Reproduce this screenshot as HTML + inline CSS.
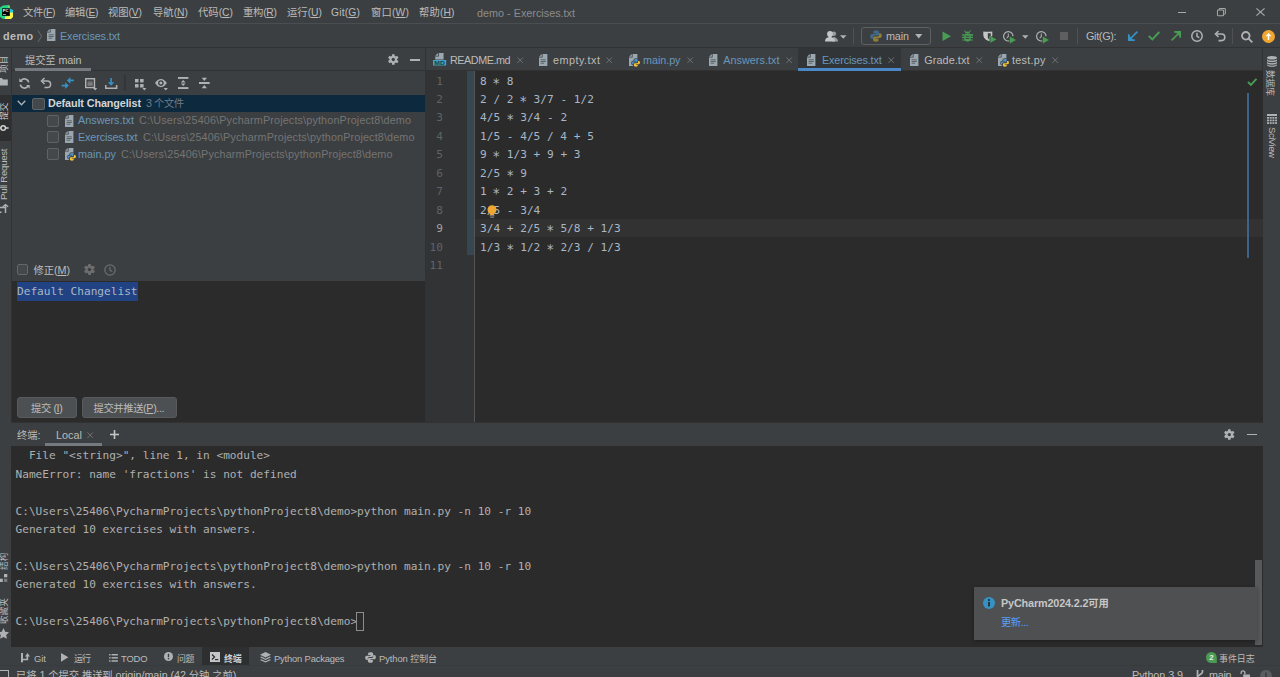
<!DOCTYPE html>
<html lang="zh">
<head>
<meta charset="utf-8">
<title>demo - Exercises.txt</title>
<style>
*{box-sizing:border-box;margin:0;padding:0}
html,body{width:1280px;height:677px;overflow:hidden;background:#3c3f41}
body{position:relative;font-family:"Liberation Sans","Noto Sans CJK SC",sans-serif;font-size:10.8px;color:#bbbbbb;line-height:14px}
.a{position:absolute}
.t{position:absolute;white-space:nowrap;height:14px;line-height:14px}
.m{position:absolute;white-space:pre;font-family:"DejaVu Sans Mono","Liberation Mono","Noto Sans CJK SC",monospace;font-size:11.13px;height:18px;line-height:18px;color:#a9b7c6}
.blue{color:#6897bb}
.grey{color:#747474}
.b{font-weight:bold}
.sm{font-size:9.400px}
.s{display:inline-block;transform:translateY(2px) scale(1.200)}
.c{font-size:.954em}
.mn{font-size:10.300px}
.mn .c{font-size:1em}
u{text-decoration:underline;text-underline-offset:1px}
svg{position:absolute;overflow:visible}
</style>
</head>
<body>
<!-- ===== backgrounds ===== -->
<div class="a" id="menubar" style="left:0;top:0;width:1280px;height:23px;background:#3c3f41"></div>
<div class="a" style="left:0;top:23px;width:1280px;height:1px;background:#4b4e50"></div>
<div class="a" id="navbar" style="left:0;top:24px;width:1280px;height:23px;background:#3c3f41"></div>
<div class="a" style="left:0;top:47px;width:1280px;height:1px;background:#323232"></div>
<!-- left strip -->
<div class="a" id="lstrip" style="left:0;top:48px;width:11px;height:599px;background:#3c3f41"></div>
<div class="a" style="left:11px;top:48px;width:1px;height:375px;background:#323232"></div>
<!-- right strip -->
<div class="a" id="rstrip" style="left:1263px;top:48px;width:17px;height:599px;background:#3c3f41"></div>
<div class="a" style="left:1262px;top:48px;width:1px;height:375px;background:#323232"></div>
<!-- commit panel -->
<div class="a" id="commit" style="left:12px;top:48px;width:414px;height:374px;background:#3c3f41"></div>
<div class="a" style="left:425px;top:48px;width:1px;height:374px;background:#323232"></div>
<!-- editor -->
<div class="a" id="tabs" style="left:426px;top:48px;width:836px;height:22px;background:#3c3f41"></div>
<div class="a" style="left:426px;top:70px;width:836px;height:1px;background:#323232"></div>
<div class="a" id="editor" style="left:426px;top:71px;width:837px;height:351px;background:#2b2b2b"></div>
<div class="a" id="gutter" style="left:426px;top:71px;width:48px;height:351px;background:#313335"></div>
<div class="a" style="left:474px;top:71px;width:1px;height:351px;background:#555555"></div>
<!-- terminal -->
<div class="a" style="left:12px;top:422px;width:1250px;height:1px;background:#323232"></div>
<div class="a" id="termhead" style="left:11px;top:423px;width:1252px;height:23px;background:#3c3f41"></div>
<div class="a" id="term" style="left:11px;top:446px;width:1252px;height:201px;background:#2b2b2b"></div>
<!-- bottom bars -->
<div class="a" id="bottombar" style="left:0;top:647px;width:1280px;height:20px;background:#3c3f41"></div>
<div class="a" style="left:0;top:665px;width:1280px;height:1px;background:#383b3d"></div>
<div class="a" id="status" style="left:0;top:668px;width:1280px;height:9px;background:#3c3f41"></div>

<!-- ===== MENU BAR ===== -->
<svg style="left:-1px;top:5px" width="15" height="14" viewBox="0 0 15 14">
  <polygon points="0,3 4,0.500 9.500,0 10.500,2.500 11,8 8,13.500 4,14 0,11" fill="#21d789"/>
  <polygon points="9,1 10.300,0.300 10.800,3.500 14.200,5 14,8 10.500,8" fill="#1fc4e6"/>
  <polygon points="9.300,0.300 10.400,0.200 10.700,3 9.300,3" fill="#9be33a"/>
  <polygon points="6,14 12,14 14,12 14,7.500 10.500,7.500 10.500,11 6,11.500" fill="#fcf84a"/>
  <rect x="3.100" y="3.300" width="7.600" height="7.500" fill="#000"/>
  <text x="3.700" y="7.300" font-family="Liberation Sans,sans-serif" font-size="4.200" font-weight="bold" fill="#fff">PC</text>
  <rect x="4" y="9" width="3" height="0.700" fill="#ddd"/>
</svg>
<div class="t mn" style="letter-spacing:-0.328px;left:23px;top:5.600px"><span class="c">文件</span>(<u>F</u>)</div>
<div class="t mn" style="letter-spacing:-0.223px;left:65px;top:5.600px"><span class="c">编辑</span>(<u>E</u>)</div>
<div class="t mn" style="letter-spacing:-0.098px;left:108px;top:5.600px"><span class="c">视图</span>(<u>V</u>)</div>
<div class="t mn" style="letter-spacing:0.012px;left:153px;top:5.600px"><span class="c">导航</span>(<u>N</u>)</div>
<div class="t mn" style="letter-spacing:0.012px;left:198px;top:5.600px"><span class="c">代码</span>(<u>C</u>)</div>
<div class="t mn" style="letter-spacing:-0.238px;left:243px;top:5.600px"><span class="c">重构</span>(<u>R</u>)</div>
<div class="t mn" style="letter-spacing:0.012px;left:287px;top:5.600px"><span class="c">运行</span>(<u>U</u>)</div>
<div class="t mn" style="letter-spacing:0.191px;left:331px;top:5.600px">Git(<u>G</u>)</div>
<div class="t mn" style="letter-spacing:0.191px;left:371px;top:5.600px"><span class="c">窗口</span>(<u>W</u>)</div>
<div class="t mn" style="letter-spacing:0.137px;left:419px;top:5.600px"><span class="c">帮助</span>(<u>H</u>)</div>
<div class="t" style="letter-spacing:0.010px;left:477px;top:5.600px;color:#8c8c8c">demo - Exercises.txt</div>
<!-- window controls -->
<div class="a" style="left:1177.800px;top:12px;width:8.600px;height:1px;background:#a8a8a8"></div>
<svg style="left:1217.200px;top:8px" width="8.800" height="8.200" viewBox="0 0 10 10" preserveAspectRatio="none" fill="none" stroke="#a8a8a8" stroke-width="1.150">
  <rect x="0.5" y="2.5" width="7" height="7" rx="1"/><path d="M2.5 2.5V1.5a1 1 0 0 1 1-1h5a1 1 0 0 1 1 1v5a1 1 0 0 1-1 1H7.5"/>
</svg>
<svg style="left:1256px;top:8px" width="9" height="8" viewBox="0 0 10 10" preserveAspectRatio="none" fill="none" stroke="#a8a8a8" stroke-width="1.250">
  <path d="M0.5 0.5L9.5 9.5M9.5 0.5L0.5 9.5"/>
</svg>

<!-- ===== NAV BAR ===== -->
<div class="t b" style="letter-spacing:0.401px;left:3px;top:29px">demo</div>
<svg style="left:36.600px;top:29.500px" width="5.500" height="12.500" viewBox="0 0 6 12" preserveAspectRatio="none" fill="none" stroke="#65686a" stroke-width="1"><path d="M1 0.5L5 6L1 11.5"/></svg>
<svg class="ftxt" style="left:47px;top:29.400px" width="8.400" height="12" viewBox="0 0 8.400 12"><path d="M3.600 0H8.400V12H0V3.600H3.600Z" fill="#9aa7b0"/><path d="M0 2.800L2.800 0V2.800Z" fill="#9aa7b0"/><rect x="1.600" y="5.300" width="5.200" height="1" fill="#3c3f41" opacity=".65"/><rect x="1.600" y="7" width="5.200" height="1" fill="#3c3f41" opacity=".65"/><rect x="1.600" y="8.700" width="3.600" height="1" fill="#3c3f41" opacity=".65"/></svg>
<div class="t blue" style="letter-spacing:-0.100px;left:60px;top:29px">Exercises.txt</div>
<!-- toolbar right -->
<svg style="left:824.500px;top:30.500px" width="13" height="11" viewBox="0 0 13 11" fill="#c3c5c7"><circle cx="8.800" cy="2.800" r="2.300" opacity=".7"/><path d="M7 10.500C7 7.500 8 6 9 6S13 7.500 13 10.500Z" opacity=".7"/><circle cx="5" cy="3" r="2.900"/><path d="M0 10.500C0 8 1.500 6.800 3.400 6.300L3.600 5H6.400L6.600 6.300C8.500 6.800 10 8 10 10.500Z"/></svg>
<svg style="left:840px;top:35px" width="6.500" height="4" viewBox="0 0 7 4"><path d="M0 0H7L3.5 4Z" fill="#afb1b3"/></svg>
<div class="a" style="left:853px;top:28px;width:1px;height:16px;background:#515151"></div>
<div class="a" style="left:861px;top:27px;width:70px;height:18px;border:1px solid #5e6162;border-radius:3px"></div>
<svg style="left:869.500px;top:30px" width="12" height="12" viewBox="0 0 12 12"><path d="M6 0.3C3.5 0.3 3.4 1.4 3.4 2v1.4H6.1V4H2C0.8 4 0.2 5 0.2 6.4S0.8 8.8 2 8.8h1V7.2c0-1 .9-1.8 1.9-1.8h2.6c.8 0 1.4-.7 1.4-1.5V2C8.9 1 8 .3 6 .3z" fill="#41698a"/><path d="M6 11.7c2.500 0 2.600-1.100 2.600-1.700V8.600H5.900V8H10c1.200 0 1.800-1 1.800-2.400S11.200 3.200 10 3.200H9v1.600c0 1-.9 1.800-1.900 1.800H4.500c-.8 0-1.400.7-1.400 1.500V10c0 1 .9 1.700 2.900 1.700z" fill="#8f7c38"/></svg>
<div class="t" style="letter-spacing:-0.135px;left:886px;top:29px">main</div>
<svg style="left:915.400px;top:34px" width="7.500" height="4.500" viewBox="0 0 8 5"><path d="M0 0H8L4 5Z" fill="#afb1b3"/></svg>
<svg style="left:942px;top:31px" width="9" height="10.500" viewBox="0 0 9 12" preserveAspectRatio="none"><path d="M0.5 0.5L9 6L0.5 11.500Z" fill="#499c54"/></svg>
<!--bug-->
<svg style="left:962px;top:30px" width="11" height="12" viewBox="0 0 11 12" fill="#499c54"><path d="M2.600 0.200L4.300 2L3.700 2.600L2 0.800ZM8.400 0.200L6.700 2L7.300 2.600L9 0.800Z"/><path d="M3 3.200A2.500 1.700 0 0 1 8 3.200Z"/><rect x="2.200" y="3.600" width="6.600" height="8" rx="3"/><path d="M0 4.300H2.500V5.500H0ZM8.500 4.300H11V5.500H0ZM0 6.800H2.500V8H0ZM8.500 6.800H11V8H8.500ZM0.300 9.400H2.700V10.600H0.300ZM8.300 9.400H10.700V10.600H8.300Z"/><path d="M8.500 4.300H11V5.500H8.500Z"/><rect x="3.600" y="5.700" width="3.800" height="1" fill="#3c3f41"/><rect x="3.600" y="8" width="3.800" height="1" fill="#3c3f41"/></svg>
<!--coverage-->
<svg style="left:982.500px;top:31px" width="14" height="12" viewBox="0 0 14 12"><path d="M0.300 0.500C3 0.800 6 0.800 9.300 0.500V5L6.500 6V10.300C3 9.300 0.300 7 0.300 3.500Z" fill="#c3c5c7"/><path d="M4.800 2.200H7.800V5L6.300 5.800V8.500C5.500 8 5.100 7.600 4.800 7Z" fill="#3c3f41"/><path d="M7.300 5L13.500 8.400L7.300 11.800Z" fill="#499c54"/></svg>
<!--profile-->
<svg style="left:1003px;top:30.500px" width="14" height="13" viewBox="0 0 14 13"><path d="M5.300 0A5.300 5.300 0 1 0 6.300 10.500V9.300A4.100 4.100 0 1 1 9.400 5.300H10.600A5.300 5.300 0 0 0 5.300 0Z" fill="#afb1b3"/><path d="M4.800 2.400H5.800V5.800H4.800Z" fill="#afb1b3"/><path d="M5 5.100L3.300 6.900L4 7.600L5.800 5.800Z" fill="#afb1b3"/><path d="M6.800 5.500L13 9L6.800 12.500Z" fill="#499c54"/></svg>
<svg style="left:1022px;top:35px" width="6.500" height="4" viewBox="0 0 7 4"><path d="M0 0H7L3.500 4Z" fill="#afb1b3"/></svg>
<svg style="left:1036px;top:30.500px" width="14" height="13" viewBox="0 0 14 13"><path d="M5.300 0A5.300 5.300 0 1 0 6.300 10.500V9.300A4.100 4.100 0 1 1 9.400 5.300H10.600A5.300 5.300 0 0 0 5.300 0Z" fill="#afb1b3"/><path d="M4.800 2.400H5.800V5.800H4.800Z" fill="#afb1b3"/><path d="M5 5.100L3.300 6.900L4 7.600L5.800 5.800Z" fill="#afb1b3"/><path d="M6.800 5.500L13 9L6.800 12.500Z" fill="#499c54"/></svg>
<div class="a" style="left:1060px;top:32px;width:8.400px;height:8.300px;background:#5d5f61"></div>
<div class="a" style="left:1077px;top:28px;width:1px;height:16px;background:#515151"></div>
<div class="t" style="letter-spacing:-0.315px;left:1086px;top:29px">Git(G):</div>
<svg style="left:1127.500px;top:31px" width="10" height="10" viewBox="0 0 10 10" fill="none" stroke="#3592c4" stroke-width="1.700"><path d="M9.400 0.600L2 8"/><path d="M0.800 3.200V9.200H6.800" fill="none" stroke-width="1.700"/><path d="M1 4.500V9H5.500Z" fill="#3592c4" stroke="none"/></svg>
<svg style="left:1148.200px;top:31px" width="12" height="10" viewBox="0 0 12 10" fill="none" stroke="#499c54" stroke-width="1.900"><path d="M0.800 5L4.300 8.500L11.300 1"/></svg>
<svg style="left:1170.500px;top:31px" width="10" height="10" viewBox="0 0 10 10" fill="none" stroke="#499c54" stroke-width="1.700"><path d="M0.600 9.400L8 2"/><path d="M3.200 0.800H9.200V6.800" fill="none" stroke-width="1.700"/><path d="M4.500 1H9V5.500Z" fill="#499c54" stroke="none"/></svg>
<svg style="left:1191px;top:30px" width="12" height="12" viewBox="0 0 12 12" fill="none" stroke="#afb1b3" stroke-width="1.500"><circle cx="6" cy="6" r="5.200"/><path d="M6 2.800V6.300L8.300 7.600"/></svg>
<svg style="left:1213.500px;top:30px" width="12" height="12" viewBox="0 0 12 12" fill="none" stroke="#afb1b3" stroke-width="1.600"><path d="M4.500 1L1.500 4L4.500 7"/><path d="M1.800 4H7.500A3.300 3.300 0 0 1 7.500 10.600H4.500"/></svg>
<div class="a" style="left:1232px;top:28px;width:1px;height:16px;background:#515151"></div>
<svg style="left:1240.500px;top:30.500px" width="12" height="12" viewBox="0 0 12 12" fill="none" stroke="#afb1b3" stroke-width="1.800"><circle cx="4.800" cy="4.800" r="3.800"/><path d="M7.600 7.600L11.300 11.300"/></svg>
<svg style="left:1262px;top:30px" width="13" height="13" viewBox="0 0 13 13"><circle cx="6.500" cy="6.500" r="6.500" fill="#f0a732"/><path d="M6.500 3L3.500 6.300H5.800V10H7.200V6.300H9.500Z" fill="#fff"/></svg>

<!-- ===== COMMIT PANEL ===== -->
<div class="a" style="left:12px;top:70px;width:413px;height:1px;background:#323232"></div>
<div class="t" style="letter-spacing:-0.114px;left:25px;top:53px"><span class="c">提交至</span> main</div>
<div class="a" style="left:15px;top:68px;width:76px;height:3px;background:#747a80"></div>
<!-- gear + minus -->
<svg class="gear" style="left:387.500px;top:54px" width="10.600" height="11" viewBox="0 0 11 11"><g fill="#afb1b3"><circle cx="5.500" cy="5.500" r="3.900"/><rect x="4.100" y="0" width="2.800" height="11" rx=".4"/><rect x="4.100" y="0" width="2.800" height="11" rx=".4" transform="rotate(60 5.500 5.500)"/><rect x="4.100" y="0" width="2.800" height="11" rx=".4" transform="rotate(120 5.500 5.500)"/></g><circle cx="5.500" cy="5.500" r="1.700" fill="#3c3f41"/></svg>
<div class="a" style="left:409.600px;top:58.900px;width:10.600px;height:1.700px;background:#afb1b3"></div>
<!-- toolbar icons (y center 83) -->
<svg style="left:18.500px;top:77.500px" width="11" height="11" viewBox="0 0 11 11" fill="none" stroke="#afb1b3" stroke-width="1.600"><path d="M9.700 4.300A4.300 4.300 0 0 0 2 2.700"/><path d="M1.300 6.700A4.300 4.300 0 0 0 9 8.300"/><path d="M0.300 0.300V3.900H3.900Z" fill="#afb1b3" stroke="none"/><path d="M10.700 10.700V7.100H7.100Z" fill="#afb1b3" stroke="none"/></svg>
<svg style="left:40px;top:77px" width="12" height="12" viewBox="0 0 12 12" fill="none" stroke="#afb1b3" stroke-width="1.500"><path d="M4.500 1L1.500 4L4.500 7"/><path d="M1.800 4H7.300A3.300 3.300 0 0 1 7.300 10.600H4.500"/></svg>
<svg style="left:61px;top:77px" width="13" height="12" viewBox="0 0 13 12" fill="#3592c4"><path d="M5.900 3.400L9.400 0V2.600H12.800V4.200H9.400V6.800Z"/><path d="M7.800 8.600L4.200 5.200V7.800H0.700V9.400H4.200V12Z"/></svg>
<svg style="left:84.800px;top:78px" width="12.200" height="12.600" viewBox="0 0 12.200 12.600"><path d="M0.750 0.750H9.450V9.450H0.750Z" fill="#2f3133" stroke="#afb1b3" stroke-width="1.500"/><rect x="2.400" y="2.600" width="5.400" height="1.100" fill="#afb1b3" opacity=".55"/><rect x="2.400" y="4.500" width="5.400" height="1.100" fill="#afb1b3"/><rect x="2.400" y="6.400" width="5.400" height="1.100" fill="#afb1b3"/><path d="M8 10.100H12.200L10.100 12.500Z" fill="#afb1b3"/></svg>
<svg style="left:105px;top:77.700px" width="12.400" height="11" viewBox="0 0 12.400 11"><path d="M5.300 0H6.900V4.200H9.400L6.100 7.700L2.800 4.200H5.300Z" fill="#3592c4"/><path d="M0.750 7.100V10.250H11.650V7.100" fill="none" stroke="#afb1b3" stroke-width="1.500"/></svg>
<div class="a" style="left:124px;top:75px;width:2px;height:16px;background:#333537"></div>
<svg style="left:134.900px;top:78.800px" width="11.500" height="11.500" viewBox="0 0 11.500 11.500" fill="#afb1b3"><rect x="0" y="0" width="3.500" height="3.400"/><rect x="5.100" y="0" width="3.500" height="3.400"/><rect x="0" y="5.100" width="3.500" height="3.400"/><rect x="5.100" y="5.100" width="3.500" height="3.400"/><path d="M7.300 9.100H11.400L9.350 11.500Z"/></svg>
<svg style="left:155px;top:78.800px" width="13" height="11.600" viewBox="0 0 13 11.600"><path d="M0 4.100C1.800 1.200 3.800 0 5.900 0S10 1.200 11.800 4.100C10 7 8 8.200 5.900 8.200S1.800 7 0 4.100Z" fill="#afb1b3"/><circle cx="5.900" cy="4.100" r="2.800" fill="#3c3f41"/><circle cx="5.900" cy="4.100" r="1.500" fill="#afb1b3"/><path d="M8.600 9.100H12.900L10.750 11.500Z" fill="#afb1b3"/></svg>
<svg style="left:177.700px;top:77px" width="10.400" height="12" viewBox="0 0 10.400 12" fill="#afb1b3"><rect x="0" y="0" width="10.400" height="1.900"/><rect x="0" y="10.100" width="10.400" height="1.900"/><path d="M5.200 3L7.600 5.500H2.800Z"/><path d="M5.200 9L7.600 6.500H2.800Z"/></svg>
<svg style="left:199px;top:77px" width="10.700" height="12" viewBox="0 0 10.700 12" fill="#afb1b3"><rect x="0" y="5" width="10.700" height="2"/><path d="M5.350 3.900L8 0.700H2.700Z"/><path d="M5.350 8.100L8 11.200H2.700Z"/></svg>
<!-- tree -->
<div class="a" style="left:12px;top:95px;width:413px;height:17px;background:#0d293e"></div>
<svg style="left:17px;top:100px" width="9" height="6" viewBox="0 0 9 6" fill="none" stroke="#afb1b3" stroke-width="1.300"><path d="M0.700 0.700L4.500 4.800L8.300 0.700"/></svg>
<div class="a cb" style="left:32.300px;top:97.700px;width:12.400px;height:12.400px;background:#43494a;border:1px solid #606365;border-radius:2px"></div>
<div class="t b" style="letter-spacing:-0.106px;left:48px;top:96px;color:#d5d5d5">Default Changelist</div>
<div class="t grey" style="letter-spacing:-0.477px;left:146px;top:96px;color:#6e7c88">3 <span class="c">个文件</span></div>

<div class="a cb" style="left:47px;top:115px;width:12px;height:12px;background:#43494a;border:1px solid #606365;border-radius:2px"></div>
<svg style="left:64.8px;top:114.7px" width="8.400" height="12" viewBox="0 0 8.400 12"><path d="M3.600 0H8.400V12H0V3.600H3.600Z" fill="#9aa7b0"/><path d="M0 2.800L2.800 0V2.800Z" fill="#9aa7b0"/><rect x="1.600" y="5.300" width="5.200" height="1" fill="#3c3f41" opacity=".65"/><rect x="1.600" y="7" width="5.200" height="1" fill="#3c3f41" opacity=".65"/><rect x="1.600" y="8.700" width="3.600" height="1" fill="#3c3f41" opacity=".65"/></svg>
<div class="t blue" style="letter-spacing:0.019px;left:78px;top:113px">Answers.txt</div>
<div class="t grey" style="letter-spacing:0.150px;left:139px;top:113px">C:\Users\25406\PycharmProjects\pythonProject8\demo</div>

<div class="a cb" style="left:47px;top:131px;width:12px;height:12px;background:#43494a;border:1px solid #606365;border-radius:2px"></div>
<svg style="left:64.8px;top:131.3px" width="8.400" height="12" viewBox="0 0 8.400 12"><path d="M3.600 0H8.400V12H0V3.600H3.600Z" fill="#9aa7b0"/><path d="M0 2.800L2.800 0V2.800Z" fill="#9aa7b0"/><rect x="1.600" y="5.300" width="5.200" height="1" fill="#3c3f41" opacity=".65"/><rect x="1.600" y="7" width="5.200" height="1" fill="#3c3f41" opacity=".65"/><rect x="1.600" y="8.700" width="3.600" height="1" fill="#3c3f41" opacity=".65"/></svg>
<div class="t blue" style="letter-spacing:-0.142px;left:78px;top:130px">Exercises.txt</div>
<div class="t grey" style="letter-spacing:0.140px;left:143px;top:130px">C:\Users\25406\PycharmProjects\pythonProject8\demo</div>

<div class="a cb" style="left:47px;top:148px;width:12px;height:12px;background:#43494a;border:1px solid #606365;border-radius:2px"></div>
<svg style="left:64.8px;top:148px" width="12" height="13" viewBox="0 0 12 13"><path d="M3.600 0H8.400V12H0V3.600H3.600Z" fill="#9aa7b0"/><path d="M0 2.800L2.800 0V2.800Z" fill="#9aa7b0"/><g transform="translate(2.800 4.700) scale(.69)" stroke="#3c3f41" stroke-width="2.200" paint-order="stroke" stroke-linejoin="round"><path d="M6 0.300C3.500 0.300 3.400 1.400 3.400 2v1.400H6.100V4H2C0.800 4 0.200 5 0.200 6.400S0.800 8.800 2 8.800h1V7.200c0-1 .9-1.800 1.900-1.800h2.600c.8 0 1.400-.7 1.400-1.500V2C8.900 1 8 .3 6 .3z" fill="#4f8fc6"/><path d="M6 11.700c2.500 0 2.600-1.100 2.600-1.700V8.600H5.900V8H10c1.200 0 1.800-1 1.800-2.400S11.200 3.200 10 3.200H9v1.600c0 1-.9 1.800-1.900 1.800H4.500c-.8 0-1.400.7-1.400 1.500V10c0 1 .9 1.700 2.900 1.700z" fill="#f2c037"/></g></svg>
<div class="t blue" style="letter-spacing:0.031px;left:78px;top:147px">main.py</div>
<div class="t grey" style="letter-spacing:0.140px;left:121px;top:147px">C:\Users\25406\PycharmProjects\pythonProject8\demo</div>

<!-- amend row -->
<div class="a cb" style="left:16.500px;top:263.600px;width:11.800px;height:11.800px;background:#43494a;border:1px solid #646769;border-radius:2px"></div>
<div class="t" style="letter-spacing:-0.078px;left:33.500px;top:263px"><span class="c">修正</span>(<u>M</u>)</div>
<svg class="gear" style="left:83.500px;top:264px" width="11" height="11" viewBox="0 0 11 11"><g fill="#6e6e6e"><circle cx="5.500" cy="5.500" r="3.900"/><rect x="4.100" y="0" width="2.800" height="11" rx=".4"/><rect x="4.100" y="0" width="2.800" height="11" rx=".4" transform="rotate(60 5.500 5.500)"/><rect x="4.100" y="0" width="2.800" height="11" rx=".4" transform="rotate(120 5.500 5.500)"/></g><circle cx="5.500" cy="5.500" r="1.700" fill="#3c3f41"/></svg>
<svg style="left:104px;top:264px" width="12" height="12" viewBox="0 0 12 12" fill="none" stroke="#6e6e6e" stroke-width="1.200"><circle cx="6" cy="6" r="5.200"/><path d="M6 2.800V6.300L8.300 7.600"/></svg>
<!-- message editor -->
<div class="a" style="left:12px;top:281px;width:413px;height:141px;background:#2b2b2b"></div>
<div class="a" style="left:17px;top:282px;width:120.500px;height:18.600px;background:#214283"></div>
<div class="m" style="left:17px;top:283px;height:17px;line-height:17px">Default Changelist</div>
<!-- buttons -->
<div class="a" style="left:17px;top:397px;width:60px;height:21px;background:#4c5052;border:1px solid #575b5d;border-radius:3px"></div>
<div class="t" style="letter-spacing:-0.403px;left:31px;top:401px"><span class="c">提交</span> (<u>I</u>)</div>
<div class="a" style="left:82px;top:397px;width:95px;height:21px;background:#4c5052;border:1px solid #575b5d;border-radius:3px"></div>
<div class="t" style="letter-spacing:-0.381px;left:93.500px;top:401px"><span class="c">提交并推送</span>(<u>P</u>)...</div>

<!-- ===== EDITOR TABS ===== -->
<div class="a" style="left:798px;top:48px;width:103px;height:22px;background:#323537"></div>
<svg style="left:433.400px;top:53.400px" width="13.200" height="12.500" viewBox="0 0 13.200 12.500"><path d="M5.800 0H10.600V6.400H2.200V3.600H5.800Z" fill="#9aa7b0"/><path d="M2.200 2.800L5 0V2.800Z" fill="#9aa7b0"/><rect x="0" y="7" width="13.200" height="5.500" fill="#40b6e0" opacity=".85"/><text x="1.300" y="11.700" font-family="Liberation Sans,sans-serif" font-size="5.200" font-weight="bold" fill="#1d3c4a" textLength="10.600" lengthAdjust="spacingAndGlyphs">MD</text></svg>
<div class="t" style="letter-spacing:-0.463px;left:450px;top:53px;color:#bbbbbb">README.md</div>
<svg style="left:516.8px;top:57px" width="6.400" height="6.400" viewBox="0 0 7 7" fill="none" stroke="#757575" stroke-width="1"><path d="M0.500 0.500L6.500 6.500M6.500 0.500L0.500 6.500"/></svg>
<svg style="left:539px;top:54px" width="8.400" height="12" viewBox="0 0 8.400 12"><path d="M3.600 0H8.400V12H0V3.600H3.600Z" fill="#9aa7b0"/><path d="M0 2.800L2.800 0V2.800Z" fill="#9aa7b0"/><rect x="1.600" y="5.300" width="5.200" height="1" fill="#3c3f41" opacity=".65"/><rect x="1.600" y="7" width="5.200" height="1" fill="#3c3f41" opacity=".65"/><rect x="1.600" y="8.700" width="3.600" height="1" fill="#3c3f41" opacity=".65"/></svg>
<div class="t" style="letter-spacing:0.500px;left:553px;top:53px;color:#bbbbbb">empty.txt</div>
<svg style="left:606.3px;top:57px" width="6.400" height="6.400" viewBox="0 0 7 7" fill="none" stroke="#757575" stroke-width="1"><path d="M0.500 0.500L6.500 6.500M6.500 0.500L0.500 6.500"/></svg>
<svg style="left:628.5px;top:54px" width="12" height="13" viewBox="0 0 12 13"><path d="M3.600 0H8.400V12H0V3.600H3.600Z" fill="#9aa7b0"/><path d="M0 2.800L2.800 0V2.800Z" fill="#9aa7b0"/><g transform="translate(2.800 4.700) scale(.69)" stroke="#3c3f41" stroke-width="2.200" paint-order="stroke" stroke-linejoin="round"><path d="M6 0.300C3.500 0.300 3.400 1.400 3.400 2v1.400H6.100V4H2C0.800 4 0.200 5 0.200 6.400S0.800 8.800 2 8.800h1V7.200c0-1 .9-1.800 1.900-1.800h2.600c.8 0 1.400-.7 1.400-1.500V2C8.900 1 8 .3 6 .3z" fill="#4f8fc6"/><path d="M6 11.700c2.500 0 2.600-1.100 2.600-1.700V8.600H5.900V8H10c1.200 0 1.800-1 1.800-2.400S11.200 3.200 10 3.200H9v1.600c0 1-.9 1.800-1.900 1.800H4.500c-.8 0-1.400.7-1.400 1.500V10c0 1 .9 1.700 2.900 1.700z" fill="#f2c037"/></g></svg>
<div class="t" style="letter-spacing:-0.052px;left:643px;top:53px;color:#6897bb">main.py</div>
<svg style="left:686.8px;top:57px" width="6.400" height="6.400" viewBox="0 0 7 7" fill="none" stroke="#757575" stroke-width="1"><path d="M0.500 0.500L6.500 6.500M6.500 0.500L0.500 6.500"/></svg>
<svg style="left:708.8px;top:54px" width="8.400" height="12" viewBox="0 0 8.400 12"><path d="M3.600 0H8.400V12H0V3.600H3.600Z" fill="#9aa7b0"/><path d="M0 2.800L2.800 0V2.800Z" fill="#9aa7b0"/><rect x="1.600" y="5.300" width="5.200" height="1" fill="#3c3f41" opacity=".65"/><rect x="1.600" y="7" width="5.200" height="1" fill="#3c3f41" opacity=".65"/><rect x="1.600" y="8.700" width="3.600" height="1" fill="#3c3f41" opacity=".65"/></svg>
<div class="t" style="letter-spacing:0.049px;left:723.2px;top:53px;color:#6897bb">Answers.txt</div>
<svg style="left:786.0px;top:57px" width="6.400" height="6.400" viewBox="0 0 7 7" fill="none" stroke="#757575" stroke-width="1"><path d="M0.500 0.500L6.500 6.500M6.500 0.500L0.500 6.500"/></svg>
<svg style="left:807px;top:54px" width="8.400" height="12" viewBox="0 0 8.400 12"><path d="M3.600 0H8.400V12H0V3.600H3.600Z" fill="#9aa7b0"/><path d="M0 2.800L2.800 0V2.800Z" fill="#9aa7b0"/><rect x="1.600" y="5.300" width="5.200" height="1" fill="#3c3f41" opacity=".65"/><rect x="1.600" y="7" width="5.200" height="1" fill="#3c3f41" opacity=".65"/><rect x="1.600" y="8.700" width="3.600" height="1" fill="#3c3f41" opacity=".65"/></svg>
<div class="t" style="letter-spacing:-0.121px;left:822px;top:53px;color:#6897bb">Exercises.txt</div>
<svg style="left:888.0px;top:57px" width="6.400" height="6.400" viewBox="0 0 7 7" fill="none" stroke="#757575" stroke-width="1"><path d="M0.500 0.500L6.500 6.500M6.500 0.500L0.500 6.500"/></svg>
<svg style="left:910px;top:54px" width="8.400" height="12" viewBox="0 0 8.400 12"><path d="M3.600 0H8.400V12H0V3.600H3.600Z" fill="#9aa7b0"/><path d="M0 2.800L2.800 0V2.800Z" fill="#9aa7b0"/><rect x="1.600" y="5.300" width="5.200" height="1" fill="#3c3f41" opacity=".65"/><rect x="1.600" y="7" width="5.200" height="1" fill="#3c3f41" opacity=".65"/><rect x="1.600" y="8.700" width="3.600" height="1" fill="#3c3f41" opacity=".65"/></svg>
<div class="t" style="letter-spacing:0.112px;left:924.2px;top:53px;color:#bbbbbb">Grade.txt</div>
<svg style="left:975.5999999999999px;top:57px" width="6.400" height="6.400" viewBox="0 0 7 7" fill="none" stroke="#757575" stroke-width="1"><path d="M0.500 0.500L6.500 6.500M6.500 0.500L0.500 6.500"/></svg>
<svg style="left:997.5px;top:54px" width="12" height="13" viewBox="0 0 12 13"><path d="M3.600 0H8.400V12H0V3.600H3.600Z" fill="#9aa7b0"/><path d="M0 2.800L2.800 0V2.800Z" fill="#9aa7b0"/><g transform="translate(2.800 4.700) scale(.69)" stroke="#3c3f41" stroke-width="2.200" paint-order="stroke" stroke-linejoin="round"><path d="M6 0.300C3.500 0.300 3.400 1.400 3.400 2v1.400H6.100V4H2C0.800 4 0.200 5 0.200 6.400S0.800 8.800 2 8.800h1V7.200c0-1 .9-1.800 1.900-1.800h2.600c.8 0 1.400-.7 1.400-1.500V2C8.900 1 8 .3 6 .3z" fill="#4f8fc6"/><path d="M6 11.700c2.500 0 2.600-1.100 2.600-1.700V8.600H5.900V8H10c1.200 0 1.800-1 1.800-2.400S11.200 3.200 10 3.200H9v1.600c0 1-.9 1.800-1.900 1.800H4.500c-.8 0-1.400.7-1.400 1.500V10c0 1 .9 1.700 2.900 1.700z" fill="#f2c037"/></g></svg>
<div class="t" style="letter-spacing:0.281px;left:1012px;top:53px;color:#bbbbbb">test.py</div>
<svg style="left:1052.3px;top:57px" width="6.400" height="6.400" viewBox="0 0 7 7" fill="none" stroke="#757575" stroke-width="1"><path d="M0.500 0.500L6.500 6.500M6.500 0.500L0.500 6.500"/></svg>
<div class="a" style="left:798px;top:68px;width:103px;height:3px;background:#4a88c7"></div>

<!-- ===== EDITOR ===== -->
<div class="a" style="left:475px;top:218.600px;width:788px;height:18.500px;background:#323232"></div>
<div class="a" style="left:467.400px;top:71px;width:6.600px;height:183.800px;background:#374752"></div>
<div class="m" style="left:426px;width:17px;text-align:right;top:72.60px;color:#606366">1</div>
<div class="m" style="left:480px;top:72.60px">8 <span class="s">*</span> 8</div>
<div class="m" style="left:426px;width:17px;text-align:right;top:91.04px;color:#606366">2</div>
<div class="m" style="left:480px;top:91.04px">2 / 2 <span class="s">*</span> 3/7 - 1/2</div>
<div class="m" style="left:426px;width:17px;text-align:right;top:109.48px;color:#606366">3</div>
<div class="m" style="left:480px;top:109.48px">4/5 <span class="s">*</span> 3/4 - 2</div>
<div class="m" style="left:426px;width:17px;text-align:right;top:127.92px;color:#606366">4</div>
<div class="m" style="left:480px;top:127.92px">1/5 - 4/5 / 4 + 5</div>
<div class="m" style="left:426px;width:17px;text-align:right;top:146.36px;color:#606366">5</div>
<div class="m" style="left:480px;top:146.36px">9 <span class="s">*</span> 1/3 + 9 + 3</div>
<div class="m" style="left:426px;width:17px;text-align:right;top:164.80px;color:#606366">6</div>
<div class="m" style="left:480px;top:164.80px">2/5 <span class="s">*</span> 9</div>
<div class="m" style="left:426px;width:17px;text-align:right;top:183.24px;color:#606366">7</div>
<div class="m" style="left:480px;top:183.24px">1 <span class="s">*</span> 2 + 3 + 2</div>
<div class="m" style="left:426px;width:17px;text-align:right;top:201.68px;color:#606366">8</div>
<div class="m" style="left:480px;top:201.68px">2/5 - 3/4</div>
<div class="m" style="left:426px;width:17px;text-align:right;top:220.12px;color:#a4a3a3">9</div>
<div class="m" style="left:480px;top:220.12px">3/4 + 2/5 <span class="s">*</span> 5/8 + 1/3</div>
<div class="m" style="left:426px;width:17px;text-align:right;top:238.56px;color:#606366">10</div>
<div class="m" style="left:480px;top:238.56px">1/3 <span class="s">*</span> 1/2 <span class="s">*</span> 2/3 / 1/3</div>
<div class="m" style="left:426px;width:17px;text-align:right;top:257.00px;color:#606366">11</div>
<svg style="left:486.700px;top:205px" width="10" height="13" viewBox="0 0 10 13"><circle cx="5" cy="4.800" r="4.500" fill="#f0a732"/><rect x="2.900" y="9" width="4.200" height="1" fill="#f0a732"/><rect x="2.700" y="10.300" width="4.800" height="1" fill="#8d9093"/><rect x="3.300" y="11.800" width="3.600" height="0.900" fill="#8d9093"/></svg>
<svg style="left:1246.600px;top:78.200px" width="10.400" height="8" viewBox="0 0 10 8" fill="none" stroke="#499c54" stroke-width="1.900"><path d="M0.800 4L3.700 6.800L9.300 0.800"/></svg>
<div class="a" style="left:1247px;top:93px;width:2px;height:165px;background:#3d6388"></div>

<!-- ===== TERMINAL ===== -->
<div class="t" style="left:17px;top:428px"><span class="c">终端</span>:</div>
<div class="t" style="left:56px;top:428px">Local</div>
<svg style="left:87px;top:432px" width="6.400" height="6.400" viewBox="0 0 7 7" fill="none" stroke="#757575" stroke-width="1"><path d="M0.500 0.500L6.500 6.500M6.500 0.500L0.500 6.500"/></svg>
<div class="a" style="left:45px;top:443px;width:57px;height:3px;background:#747a80"></div>
<svg style="left:110px;top:430px" width="9" height="9" viewBox="0 0 9 9" fill="#c4c4c4"><rect x="3.700" y="0" width="1.600" height="9"/><rect x="0" y="3.700" width="9" height="1.600"/></svg>
<svg class="gear" style="left:1224.400px;top:428.800px" width="10.600" height="11.100" viewBox="0 0 11 11"><g fill="#afb1b3"><circle cx="5.500" cy="5.500" r="3.900"/><rect x="4.100" y="0" width="2.800" height="11" rx=".4"/><rect x="4.100" y="0" width="2.800" height="11" rx=".4" transform="rotate(60 5.500 5.500)"/><rect x="4.100" y="0" width="2.800" height="11" rx=".4" transform="rotate(120 5.500 5.500)"/></g><circle cx="5.500" cy="5.500" r="1.700" fill="#3c3f41"/></svg>
<div class="a" style="left:1246.800px;top:433.700px;width:10.300px;height:1.700px;background:#afb1b3"></div>
<div class="m" style="left:15.500px;top:447.20px;color:#b0b0b0">  File "&lt;string&gt;", line 1, in &lt;module&gt;</div>
<div class="m" style="left:15.500px;top:465.64px;color:#b0b0b0">NameError: name 'fractions' is not defined</div>
<div class="m" style="left:15.500px;top:502.52px;color:#b0b0b0">C:\Users\25406\PycharmProjects\pythonProject8\demo&gt;python main.py -n 10 -r 10</div>
<div class="m" style="left:15.500px;top:520.96px;color:#b0b0b0">Generated 10 exercises with answers.</div>
<div class="m" style="left:15.500px;top:557.84px;color:#b0b0b0">C:\Users\25406\PycharmProjects\pythonProject8\demo&gt;python main.py -n 10 -r 10</div>
<div class="m" style="left:15.500px;top:576.28px;color:#b0b0b0">Generated 10 exercises with answers.</div>
<div class="m" style="left:15.500px;top:613.16px;color:#b0b0b0">C:\Users\25406\PycharmProjects\pythonProject8\demo&gt;</div>
<div class="a" style="left:356.200px;top:612px;width:7.800px;height:19px;border:1px solid #8c8c8c"></div>
<div class="a" style="left:1255px;top:560px;width:7px;height:85px;background:#58595b"></div>
<div class="a" style="left:974px;top:587px;width:283px;height:53px;background:#4e5052;box-shadow:0 1px 4px rgba(0,0,0,.35)"></div>
<svg style="left:983px;top:597px" width="12" height="12" viewBox="0 0 12 12"><circle cx="6" cy="6" r="6" fill="#3592c4"/><rect x="5.100" y="5" width="1.800" height="4.500" fill="#2b2d2f"/><circle cx="6" cy="3.100" r="1.100" fill="#2b2d2f"/></svg>
<div class="t b" style="letter-spacing:-0.143px;left:1001px;top:596px;color:#c6c6c6">PyCharm2024.2.2<span class="c">可用</span></div>
<div class="t" style="letter-spacing:-0.461px;left:1001px;top:615px;color:#589df6"><span class="c">更新</span>...</div>

<!-- ===== BOTTOM TOOL BAR ===== -->
<svg style="left:20.800px;top:653px" width="9" height="9.300" viewBox="0 0 9 9.300" fill="#afb1b3"><rect x="0" y="0" width="2" height="9.300"/><path d="M2 5.700H5.500V3.600H4L6.500 0L9 3.600H7.200V7.300H2Z"/></svg>
<div class="t sm" style="letter-spacing:-0.117px;left:34px;top:651.600px">Git</div>
<svg style="left:60.800px;top:653.300px" width="7.400" height="8.700" viewBox="0 0 8 9" preserveAspectRatio="none"><path d="M0 0L8 4.500L0 9Z" fill="#afb1b3"/></svg>
<div class="t sm" style="letter-spacing:-0.906px;left:74px;top:651.600px"><span class="c">运行</span></div>
<svg style="left:108.500px;top:653.500px" width="9" height="7.800" viewBox="0 0 9 8" fill="#afb1b3"><rect x="0" y="0" width="1.500" height="1.500"/><rect x="2.500" y="0" width="6.500" height="1.500"/><rect x="0" y="3.200" width="1.500" height="1.500"/><rect x="2.500" y="3.200" width="6.500" height="1.500"/><rect x="0" y="6.400" width="1.500" height="1.500"/><rect x="2.500" y="6.400" width="6.500" height="1.500"/></svg>
<div class="t sm" style="letter-spacing:-0.141px;left:121px;top:651.600px">TODO</div>
<svg style="left:164px;top:652px" width="9" height="9" viewBox="0 0 9 9"><circle cx="4.500" cy="4.500" r="4.500" fill="#afb1b3"/><rect x="3.800" y="1.800" width="1.400" height="3.400" fill="#3c3f41"/><rect x="3.800" y="6" width="1.400" height="1.400" fill="#3c3f41"/></svg>
<div class="t sm" style="letter-spacing:-0.406px;left:177px;top:651.600px"><span class="c">问题</span></div>
<div class="a" style="left:202px;top:647px;width:46.500px;height:18px;background:#2d2f30"></div>
<svg style="left:210px;top:652px" width="10" height="10" viewBox="0 0 10 10"><rect x="0" y="0" width="10" height="10" fill="#c4c6c8"/><path d="M2 2.500L4.500 5L2 7.500" fill="none" stroke="#2d2f30" stroke-width="1.300"/><rect x="5" y="7" width="3.300" height="1.200" fill="#2d2f30"/></svg>
<div class="t b sm" style="letter-spacing:-0.156px;left:224px;top:651.600px;color:#d0d0d0"><span class="c">终端</span></div>
<svg style="left:260px;top:652px" width="11" height="11" viewBox="0 0 11 11" fill="#afb1b3"><path d="M5.500 0L11 2.700L5.500 5.400L0 2.700Z"/><path d="M1.300 4.600L0 5.300L5.500 8L11 5.300L9.700 4.600L5.500 6.700Z"/><path d="M1.300 7.200L0 7.900L5.500 10.600L11 7.900L9.700 7.200L5.500 9.300Z"/></svg>
<div class="t sm" style="letter-spacing:-0.176px;left:274px;top:651.600px">Python Packages</div>
<svg style="left:365px;top:652px" width="11" height="11" viewBox="0 0 12 12" fill="#afb1b3"><path d="M6 0.300C3.500 0.300 3.400 1.400 3.400 2v1.400H6.100V4H2C0.800 4 0.200 5 0.200 6.400S0.800 8.800 2 8.800h1V7.200c0-1 .9-1.800 1.900-1.800h2.600c.8 0 1.400-.7 1.400-1.500V2C8.900 1 8 .3 6 .3z"/><path d="M6 11.700c2.500 0 2.600-1.100 2.600-1.700V8.600H5.900V8H10c1.200 0 1.800-1 1.800-2.400S11.200 3.200 10 3.200H9v1.600c0 1-.9 1.800-1.900 1.800H4.500c-.8 0-1.400.7-1.400 1.500V10c0 1 .9 1.700 2.900 1.700z"/></svg>
<div class="t sm" style="letter-spacing:-0.073px;left:379px;top:651.600px">Python <span class="c">控制台</span></div>
<svg style="left:1205.800px;top:652px" width="10.800" height="11" viewBox="0 0 10.800 11"><path d="M5.400 0A5.400 5.500 0 0 1 10.800 5.500V11H5.400A5.400 5.500 0 0 1 5.400 0Z" fill="#499c54"/><text x="5.300" y="8.300" text-anchor="middle" font-family="Liberation Sans,sans-serif" font-size="7.800" font-weight="bold" fill="#e8e8e8">2</text></svg>
<div class="t sm" style="letter-spacing:-0.037px;left:1219px;top:651.600px"><span class="c">事件日志</span></div>
<!-- ===== STATUS BAR ===== -->
<div class="a" style="left:-1px;top:670px;width:9.500px;height:9px;border:1.500px solid #afb1b3"></div>
<div class="t" style="letter-spacing:-0.069px;left:16px;top:668px"><span class="c">已将</span> 1 <span class="c">个提交</span> <span class="c">推送到</span> origin/main (42 <span class="c">分钟</span> <span class="c">之前</span>)</div>
<div class="t" style="letter-spacing:-0.069px;left:1132px;top:668px">Python 3.9</div>
<svg style="left:1195.500px;top:669.500px" width="8" height="10" viewBox="0 0 8 10" fill="none" stroke="#afb1b3" stroke-width="1.700"><path d="M1.500 0V10"/><path d="M6.500 0V2C6.500 4.500 1.500 4.500 1.500 7.500"/></svg>
<div class="t" style="letter-spacing:-0.302px;left:1209px;top:668px">main</div>
<svg style="left:1239.500px;top:669.500px" width="10" height="9" viewBox="0 0 10 9" fill="#afb1b3"><path d="M0.500 4V2.800A2.500 2.500 0 0 1 5.500 2.800V4.500H4.200V2.800A1.200 1.200 0 0 0 1.800 2.800V4Z"/><rect x="3.200" y="4.500" width="6.800" height="5"/></svg>
<svg style="left:1260px;top:670px" width="12" height="12" viewBox="0 0 12 12"><circle cx="6" cy="6" r="6" fill="#5a5d5f"/><rect x="5.200" y="2.500" width="1.600" height="4.500" fill="#3c3f41"/></svg>

<!-- ===== LEFT STRIP ===== -->
<div class="a" style="left:0;top:95px;width:11px;height:46px;background:#2d2f30"></div>
<div class="t vl" style="left:-3px;top:72.500px;font-size:9.100px;transform-origin:0 0;transform:rotate(-90deg)"><span class="c">项目</span></div>
<svg style="left:0px;top:78px" width="8" height="7.600" viewBox="0 0 8 7.600"><path d="M-3 0H1.800L3.200 1.400H7.800V7.600H-3Z" fill="#afb1b3"/></svg>
<div class="t vl" style="left:-3px;top:120px;font-size:9.100px;transform-origin:0 0;transform:rotate(-90deg);color:#d0d0d0"><span class="c">提交</span></div>
<svg style="left:0px;top:123px" width="9" height="10" viewBox="0 0 9 10" fill="none" stroke="#d0d0d0" stroke-width="1.500"><circle cx="3.200" cy="5" r="2.300"/><path d="M5.500 5H8.600"/><path d="M-2 5H0.900"/></svg>
<div class="t vl" style="letter-spacing:-0.264px;left:-3px;top:200px;transform-origin:0 0;transform:rotate(-90deg);font-size:9.600px">Pull Request</div>
<svg style="left:0px;top:204px" width="9" height="9" viewBox="0 0 9 9" fill="none" stroke="#afb1b3" stroke-width="1.500"><path d="M0 3.500H5.500V9"/><path d="M0 8.200H1.500"/><path d="M2.800 2.800L5.500 0.500L8.200 2.800" stroke-width="1.300"/><path d="M5.500 0.800V4"/></svg>
<div class="t vl" style="left:-3px;top:569.500px;font-size:9.100px;transform-origin:0 0;transform:rotate(-90deg)"><span class="c">结构</span></div>
<svg style="left:0px;top:574px" width="8" height="8" viewBox="0 0 8 8" fill="#afb1b3"><rect x="4" y="0" width="3.300" height="3.300"/><rect x="-0.500" y="4.700" width="3.300" height="3.300"/><rect x="4" y="4.700" width="3.300" height="3.300" opacity=".5"/></svg>
<div class="t vl" style="left:-3px;top:624px;font-size:9.100px;transform-origin:0 0;transform:rotate(-90deg)"><span class="c">收藏夹</span></div>
<svg style="left:-2.500px;top:628px" width="11" height="11" viewBox="0 0 11 11"><path d="M5.500 0L7.200 3.700L11 4.200L8.200 6.900L8.900 10.800L5.500 8.900L2.100 10.800L2.800 6.900L0 4.200L3.800 3.700Z" fill="#afb1b3"/></svg>
<!-- ===== RIGHT STRIP ===== -->
<svg style="left:1267px;top:56px" width="10" height="10.800" viewBox="0 0 10 12" preserveAspectRatio="none" fill="#afb1b3"><ellipse cx="5" cy="2" rx="5" ry="2"/><path d="M0 3.300C0 4.400 2.200 5.200 5 5.200S10 4.400 10 3.300V5C10 6.100 7.800 6.900 5 6.900S0 6.100 0 5Z"/><path d="M0 6.100C0 7.200 2.200 8 5 8S10 7.200 10 6.100V7.800C10 8.900 7.800 9.700 5 9.700S0 8.900 0 7.800Z"/><path d="M0 8.900C0 10 2.200 10.800 5 10.800S10 10 10 8.900V10C10 11.100 7.800 12 5 12S0 11.100 0 10Z"/></svg>
<div class="t vr" style="left:1276.800px;top:70px;transform-origin:0 0;transform:rotate(90deg);font-size:9px"><span class="c">数据库</span></div>
<svg style="left:1267px;top:114px" width="10" height="10" viewBox="0 0 10 10" fill="#afb1b3"><rect x="0" y="0" width="10" height="2"/><rect x="0" y="3" width="2" height="1.700"/><rect x="2.700" y="3" width="2" height="1.700"/><rect x="5.400" y="3" width="2" height="1.700"/><rect x="8.100" y="3" width="1.900" height="1.700"/><rect x="0" y="5.600" width="2" height="1.700"/><rect x="2.700" y="5.600" width="2" height="1.700"/><rect x="5.400" y="5.600" width="2" height="1.700"/><rect x="8.100" y="5.600" width="1.900" height="1.700"/><rect x="0" y="8.200" width="2" height="1.700"/><rect x="2.700" y="8.200" width="2" height="1.700"/><rect x="5.400" y="8.200" width="2" height="1.700"/><rect x="8.100" y="8.200" width="1.900" height="1.700"/></svg>
<div class="t vr" style="letter-spacing:-0.492px;left:1279px;top:127px;transform-origin:0 0;transform:rotate(90deg);font-size:9.600px">SciView</div>

</body>
</html>
